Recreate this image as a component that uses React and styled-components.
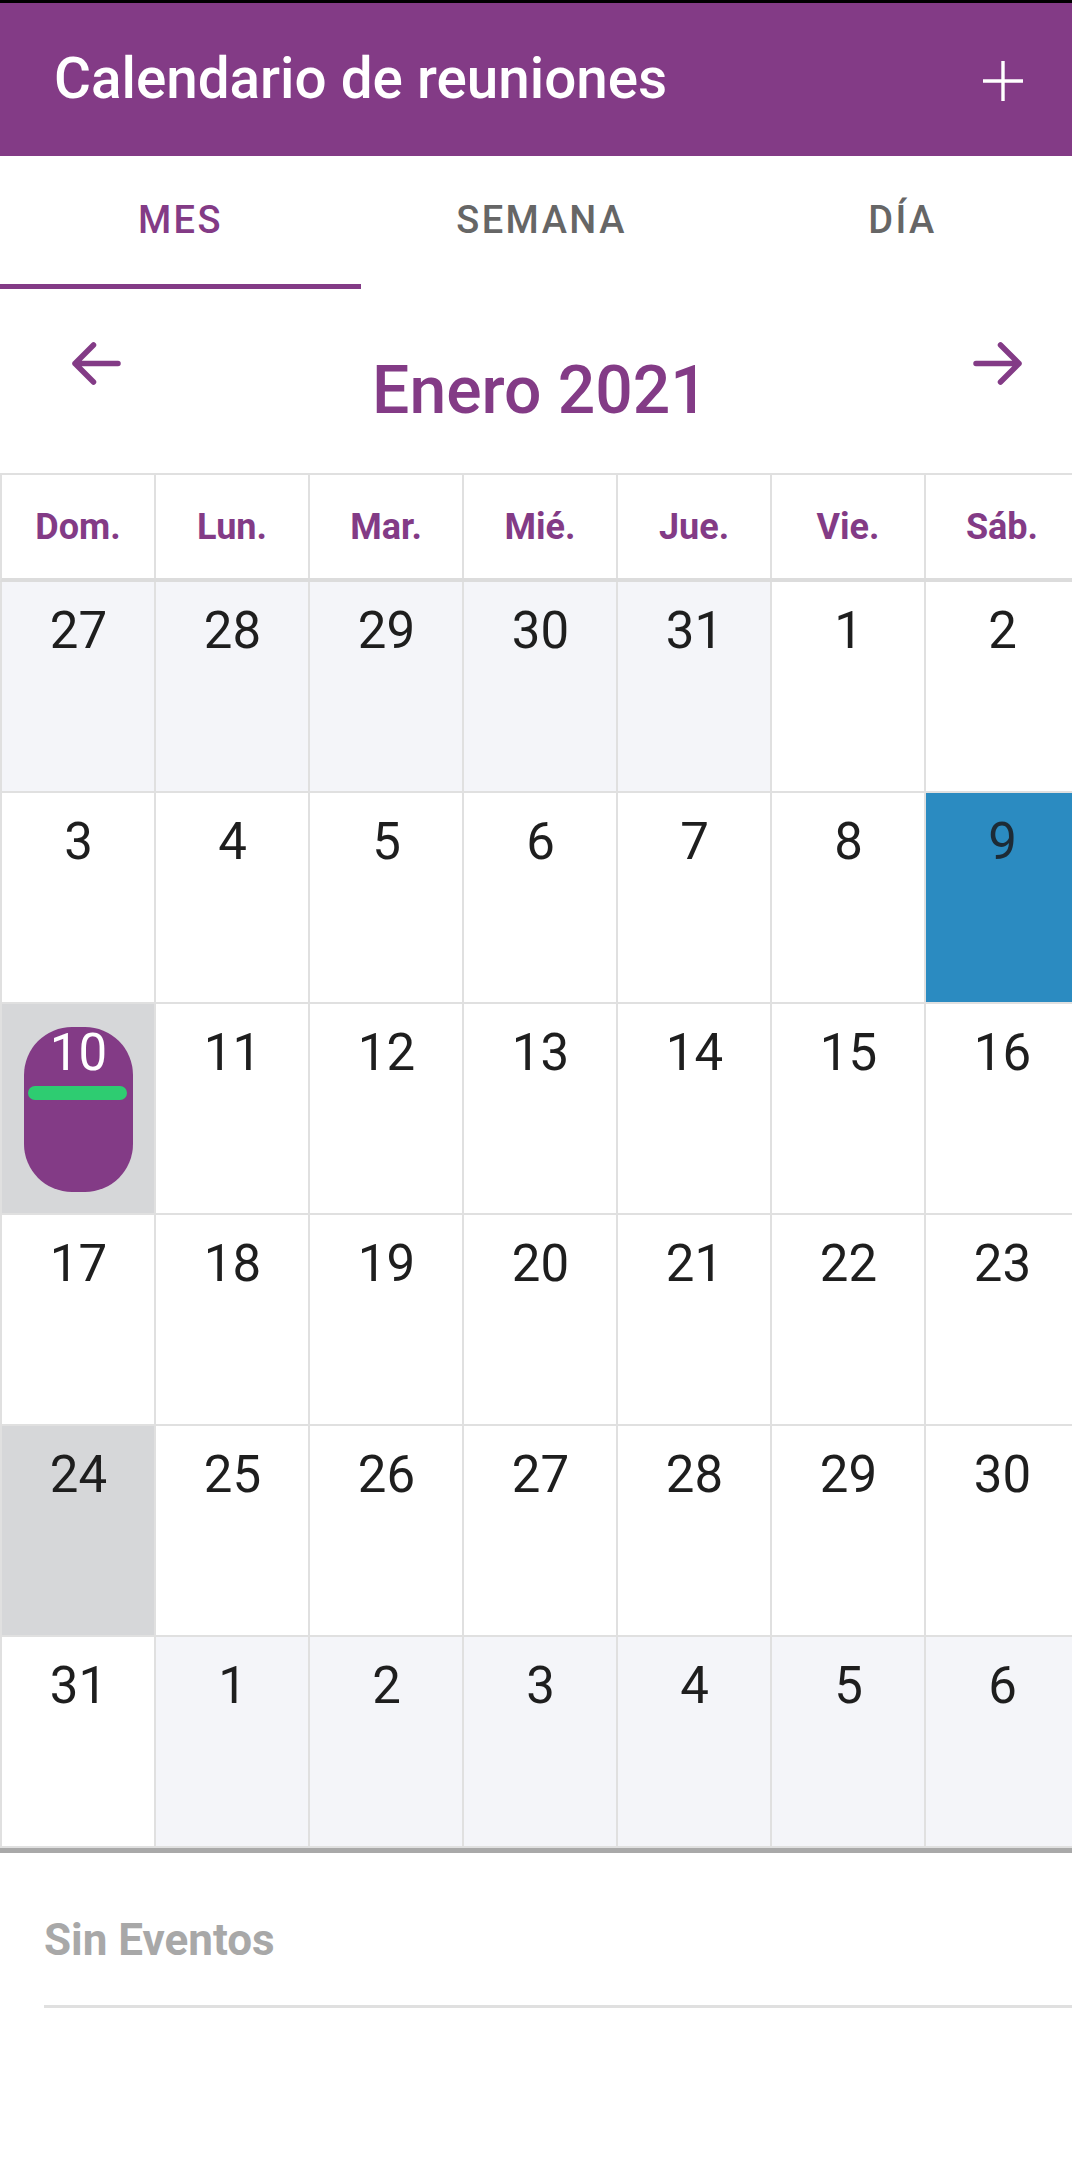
import React from "react";
import styled, { createGlobalStyle } from "styled-components";

const PURPLE = "#833b86";
const GRID = "#e0e0e0";

const GlobalStyle = createGlobalStyle`
  html, body { margin: 0; padding: 0; background: #fff; }
  body { font-family: Roboto, "Noto Sans", Arial, sans-serif; }
  * { box-sizing: border-box; }
`;

const Page = styled.div`
  width: 1072px;
  min-height: 2158px;
  background: #fff;
  overflow: hidden;
`;

const AppBar = styled.header`
  height: 156px;
  border-top: 3px solid #000;
  background: ${PURPLE};
  display: flex;
  align-items: center;
  justify-content: space-between;
  padding: 0 48px 0 54px;
`;

const Title = styled.h1`
  margin: 0;
  font-size: 56.6px;
  font-weight: 500;
  color: #fff;
  line-height: 1;
`;

const IconButton = styled.button`
  border: 0;
  background: none;
  padding: 0;
  display: flex;
  color: #fff;
  margin-top: 2px;
`;

const Tabs = styled.nav`
  display: grid;
  grid-template-columns: repeat(3, 361px);
  width: max-content;
  height: 133px;
`;

const Tab = styled.button`
  border: 0;
  background: none;
  font-family: inherit;
  font-size: 38px;
  font-weight: 500;
  letter-spacing: 2.5px;
  text-transform: uppercase;
  color: ${(p) => (p.$active ? PURPLE : "#666")};
  border-bottom: 5px solid ${(p) => (p.$active ? PURPLE : "transparent")};
  display: flex;
  align-items: center;
  justify-content: center;
  padding: 0;
`;

const MonthNav = styled.div`
  height: 184px;
  width: 1080px;
  display: grid;
  grid-template-columns: 1fr auto 1fr;
  align-items: start;
`;

const NavButton = styled.button`
  border: 0;
  background: none;
  padding: 0;
  display: flex;
  margin-top: 53px;
  justify-self: ${(p) => (p.$side === "left" ? "start" : "end")};
  margin-left: ${(p) => (p.$side === "left" ? "72px" : "0")};
  margin-right: ${(p) => (p.$side === "right" ? "58px" : "0")};
  color: ${PURPLE};
`;

const MonthTitle = styled.h2`
  margin: 63px 0 0 0;
  font-size: 66px;
  font-weight: 500;
  line-height: 78px;
  color: ${PURPLE};
`;

const CalendarViewport = styled.div`
  width: 1072px;
  overflow: hidden;
  border-bottom: 5px solid #a9a9a9;
`;

const WeekHeader = styled.div`
  display: grid;
  grid-template-columns: repeat(7, 154px);
  width: max-content;
  border-left: 2px solid ${GRID};
  border-top: 2px solid ${GRID};
  border-bottom: 4px solid #dcdcdc;
`;

const HeaderCell = styled.div`
  height: 103px;
  border-right: 2px solid ${GRID};
  display: flex;
  align-items: center;
  justify-content: center;
  font-size: 36px;
  font-weight: 700;
  color: ${PURPLE};
`;

const MonthGrid = styled.div`
  display: grid;
  grid-template-columns: repeat(7, 154px);
  grid-auto-rows: 211px;
  width: max-content;
  border-left: 2px solid ${GRID};
`;

const cellBg = {
  outside: "#f4f5f9",
  current: "#ffffff",
  today: "#d6d7d9",
  marked: "#2b8bc1",
};

const DayCell = styled.div`
  border-right: 2px solid ${GRID};
  border-bottom: 2px solid ${GRID};
  background: ${(p) => cellBg[p.$variant]};
  padding: 23px 21px 21px 22px;
  display: flex;
  flex-direction: column;
`;

const DayBox = styled.div`
  flex: 1;
  border-radius: 48px;
  background: ${(p) => (p.$selected ? PURPLE : "transparent")};
  display: flex;
  flex-direction: column;
  align-items: center;
  padding-top: 2px;
`;

const DayNumber = styled.span`
  font-size: 51px;
  line-height: 48px;
  font-weight: 400;
  color: ${(p) => (p.$selected ? "#fff" : p.$variant === "marked" ? "#1d2b36" : "#1e1e1e")};
`;

const EventBar = styled.span`
  align-self: stretch;
  height: 14px;
  margin: 9px 6px 0 4px;
  border-radius: 7px;
  background: #2ecc71;
`;

const Events = styled.section`
  padding-left: 44px;
`;

const EmptyLabel = styled.div`
  margin-top: 61px;
  font-size: 44px;
  line-height: 52px;
  font-weight: 700;
  color: #a8a8a8;
  padding-bottom: 39px;
  border-bottom: 3px solid ${GRID};
`;

const PlusIcon = () => (
  <svg width="42" height="42" viewBox="0 0 42 42" fill="none" stroke="currentColor" strokeWidth="3.4">
    <path d="M21 1 V41 M1 21 H41" />
  </svg>
);

const ArrowIcon = ({ dir }) => (
  <svg
    width="49"
    height="43"
    viewBox="0 0 49 43"
    fill="none"
    stroke="currentColor"
    strokeWidth="5.5"
    strokeLinecap="round"
    strokeLinejoin="round"
    style={{ overflow: "visible", transform: dir === "right" ? "scaleX(-1)" : undefined }}
  >
    <path d="M46 21.5 H3 M21.5 3 L3 21.5 L21.5 40" />
  </svg>
);

const weekdays = ["Dom.", "Lun.", "Mar.", "Mié.", "Jue.", "Vie.", "Sáb."];

const buildDays = () => {
  const days = [];
  [27, 28, 29, 30, 31].forEach((d) => days.push({ d, variant: "outside" }));
  for (let d = 1; d <= 31; d++) {
    let variant = "current";
    if (d === 9) variant = "marked";
    if (d === 10 || d === 24) variant = "today";
    days.push({ d, variant, selected: d === 10, event: d === 10 });
  }
  for (let d = 1; d <= 6; d++) days.push({ d, variant: "outside" });
  return days;
};

export default function App() {
  const days = buildDays();
  return (
    <>
      <GlobalStyle />
      <Page>
        <AppBar>
          <Title>Calendario de reuniones</Title>
          <IconButton aria-label="Añadir">
            <PlusIcon />
          </IconButton>
        </AppBar>
        <Tabs>
          <Tab $active>Mes</Tab>
          <Tab>Semana</Tab>
          <Tab>Día</Tab>
        </Tabs>
        <MonthNav>
          <NavButton $side="left" aria-label="Anterior">
            <ArrowIcon dir="left" />
          </NavButton>
          <MonthTitle>Enero 2021</MonthTitle>
          <NavButton $side="right" aria-label="Siguiente">
            <ArrowIcon dir="right" />
          </NavButton>
        </MonthNav>
        <CalendarViewport>
          <WeekHeader>
            {weekdays.map((w) => (
              <HeaderCell key={w}>{w}</HeaderCell>
            ))}
          </WeekHeader>
          <MonthGrid>
            {days.map((day, i) => (
              <DayCell key={i} $variant={day.variant}>
                <DayBox $selected={day.selected}>
                  <DayNumber $selected={day.selected} $variant={day.variant}>
                    {day.d}
                  </DayNumber>
                  {day.event && <EventBar />}
                </DayBox>
              </DayCell>
            ))}
          </MonthGrid>
        </CalendarViewport>
        <Events>
          <EmptyLabel>Sin Eventos</EmptyLabel>
        </Events>
      </Page>
    </>
  );
}
